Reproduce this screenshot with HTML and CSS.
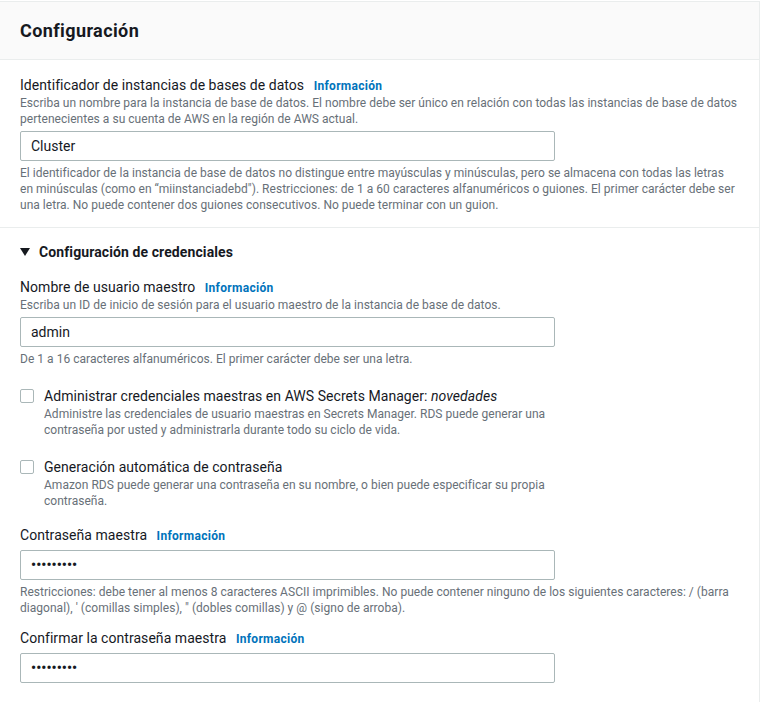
FILE: index.html
```html
<!DOCTYPE html>
<html lang="es">
<head>
<meta charset="utf-8">
<link rel="stylesheet" href="styles.css">
</head>
<body>
<div class="panel">
  <div class="panel-header"><h2>Configuración</h2></div>
  <div class="section">
    <div class="field">
      <div class="label">Identificador de instancias de bases de datos <a class="info">Información</a></div>
      <div class="desc">Escriba un nombre para la instancia de base de datos. El nombre debe ser único en relación con todas las instancias de base de datos pertenecientes a su cuenta de AWS en la región de AWS actual.</div>
      <div class="input">Cluster</div>
      <div class="constraint">El identificador de la instancia de base de datos no distingue entre mayúsculas y minúsculas, pero se almacena con todas las letras en minúsculas (como en “miinstanciadebd"). Restricciones: de 1 a 60 caracteres alfanuméricos o guiones. El primer carácter debe ser una letra. No puede contener dos guiones consecutivos. No puede terminar con un guion.</div>
    </div>
  </div>
  <div class="section creds">
    <div class="expander"><span class="caret"></span>Configuración de credenciales</div>
    <div class="field f-user">
      <div class="label">Nombre de usuario maestro <a class="info">Información</a></div>
      <div class="desc">Escriba un ID de inicio de sesión para el usuario maestro de la instancia de base de datos.</div>
      <div class="input">admin</div>
      <div class="constraint">De 1 a 16 caracteres alfanuméricos. El primer carácter debe ser una letra.</div>
    </div>
    <div class="check">
      <span class="box"></span>
      <div class="check-text">
        <div class="check-label">Administrar credenciales maestras en AWS Secrets Manager: <i>novedades</i></div>
        <div class="desc">Administre las credenciales de usuario maestras en Secrets Manager. RDS puede generar una contraseña por usted y administrarla durante todo su ciclo de vida.</div>
      </div>
    </div>
    <div class="check">
      <span class="box"></span>
      <div class="check-text">
        <div class="check-label">Generación automática de contraseña</div>
        <div class="desc">Amazon RDS puede generar una contraseña en su nombre, o bien puede especificar su propia contraseña.</div>
      </div>
    </div>
    <div class="field f-pass">
      <div class="label">Contraseña maestra <a class="info">Información</a></div>
      <div class="input no-desc dots">•••••••••</div>
      <div class="constraint">Restricciones: debe tener al menos 8 caracteres ASCII imprimibles. No puede contener ninguno de los siguientes caracteres: / (barra diagonal), ' (comillas simples), " (dobles comillas) y @ (signo de arroba).</div>
    </div>
    <div class="field f-confirm">
      <div class="label">Confirmar la contraseña maestra <a class="info">Información</a></div>
      <div class="input no-desc dots">•••••••••</div>
    </div>
  </div>
</div>
</body>
</html>
```

FILE: styles.css
```css
html, body {
  margin: 0;
  padding: 0;
  background: #ffffff;
}
body {
  font-family: Roboto, "Liberation Sans", sans-serif;
  color: #16191f;
  font-size: 14px;
}
.panel {
  width: 760px;
  border: 1px solid #eaeded;
  border-left: none;
  border-bottom: none;
  margin-top: 1px;
  box-sizing: border-box;
}
.panel-header {
  background: #fafafa;
  border-bottom: 1px solid #eaeded;
  padding: 18px 20px 17px;
}
.panel-header h2 {
  margin: 0;
  font-size: 18px;
  line-height: 22px;
  font-weight: 700;
  letter-spacing: 0.4px;
}
.section {
  padding: 15px 20px 14px;
}
.section + .section {
  border-top: 1px solid #eaeded;
  padding-top: 13px;
  padding-bottom: 30px;
}
.label {
  font-size: 14px;
  line-height: 20px;
  height: 20px;
  letter-spacing: 0.05px;
}
.info {
  color: #0073bb;
  font-weight: 700;
  font-size: 12px;
  line-height: 1;
  margin-left: 6px;
  letter-spacing: 0.3px;
}
.desc, .constraint {
  font-size: 12px;
  line-height: 16px;
  color: #687078;
  letter-spacing: 0.03px;
}
.input {
  width: 535px;
  height: 30px;
  box-sizing: border-box;
  border: 1px solid #aab7b8;
  border-radius: 2px;
  padding: 0 10px;
  line-height: 28px;
  font-size: 14px;
  margin-top: 4px;
}
.input.no-desc {
  margin-top: 5px;
}
.dots {
  font-weight: 700;
  font-size: 14px;
  letter-spacing: 0.1px;
}
.constraint {
  margin-top: 4px;
}
.expander {
  font-weight: 700;
  font-size: 14px;
  line-height: 22px;
  height: 22px;
  display: flex;
  align-items: center;
  margin-bottom: 14px;
  letter-spacing: 0.1px;
}
.caret {
  width: 0;
  height: 0;
  border-left: 5px solid transparent;
  border-right: 5px solid transparent;
  border-top: 8px solid #16191f;
  margin-right: 9px;
}
.f-user {
  margin-bottom: 19px;
}
.check {
  display: flex;
  gap: 10px;
  margin-bottom: 19px;
}
.check + .check {
  margin-bottom: 16px;
}
.box {
  flex: none;
  width: 14px;
  height: 14px;
  box-sizing: border-box;
  border: 1px solid #aab7b8;
  border-radius: 2px;
  margin-top: 3px;
}
.check-label {
  font-size: 14px;
  line-height: 20px;
  letter-spacing: 0.05px;
}
.check-text .desc {
  width: 520px;
}
.f-pass {
  margin-bottom: 12px;
}
```
